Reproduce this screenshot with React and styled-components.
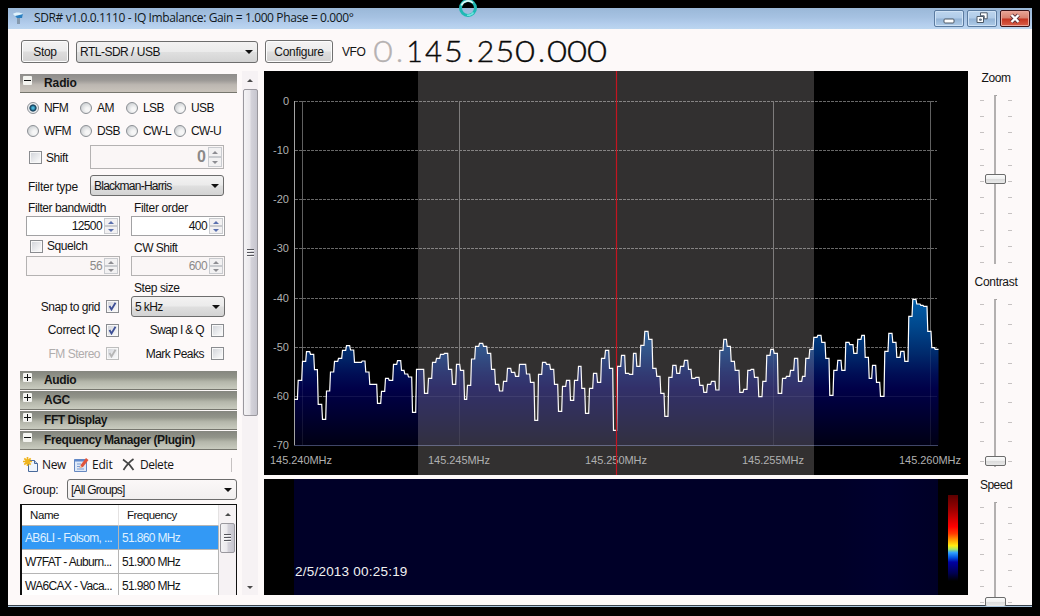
import React from "react";
import styled, { createGlobalStyle, css } from "styled-components";

const Global = createGlobalStyle`
  * { box-sizing: border-box; }
  html, body { margin: 0; background: #000; }
  body { width: 1040px; height: 616px; overflow: hidden; font-family: "Liberation Sans", Arial, sans-serif; font-size: 12px; color: #141414; }
`;

const Desktop = styled.div`
  position: relative;
  width: 1040px;
  height: 616px;
  padding: 8px;
  background: #000;
  overflow: hidden;
`;

const Window = styled.main`
  display: flex;
  flex-direction: column;
  width: 1024px;
  height: 599px;
  overflow: hidden;
  background: #fdf9f9;
  border-bottom: 1px solid #a9c4dc;
  box-shadow: inset 0 -1px 0 #39434c;
`;

const BusyCursor = styled.svg`
  position: absolute;
  left: 458px;
  top: -2px;
`;

const TitleBar = styled.header`
  display: flex;
  height: 21px;
  flex: none;
  align-items: center;
  padding: 0 2px 0 4px;
  background: linear-gradient(#9ab8d8 0%, #a6c2e2 45%, #b3cdec 75%, #bcd6f0 100%);
`;

const Title = styled.h1`
  flex: 1;
  margin: 0 0 1px 9px;
  font: 400 12px/18px "Open Sans", "Noto Sans", sans-serif;
  letter-spacing: ${(p) => p.$ls}px;
  white-space: nowrap;
  color: #101820;
`;

const CaptionButtons = styled.div`
  display: flex;
  gap: 3px;
  height: 17px;
  margin-bottom: 1px;
`;

const CaptionButton = styled.button`
  display: flex;
  align-items: center;
  justify-content: center;
  width: 30px;
  height: 17px;
  padding: 0;
  border-radius: 2px;
  border: 1px solid ${(p) => (p.$close ? "#3a1418" : "#5b7ba0")};
  box-shadow: inset 0 0 0 1px ${(p) => (p.$close ? "#eba69a" : "#cfe2f5")};
  background: ${(p) =>
    p.$close
      ? "linear-gradient(#e9a596 0%, #d9806e 48%, #c53420 52%, #d9604a 100%)"
      : "linear-gradient(#bdd5ee 0%, #b0cbe8 48%, #93b3d5 52%, #afcbe8 100%)"};
`;

const Text = styled.span`
  font-size: ${(p) => p.$size || 12}px;
  line-height: 14px;
  letter-spacing: ${(p) => p.$ls ?? -0.42}px;
  font-weight: ${(p) => (p.$bold ? 700 : 400)};
  color: ${(p) => p.$color || "inherit"};
  white-space: nowrap;
  ${(p) => p.$humanist && css`font-family: "Open Sans", "Noto Sans", sans-serif;`}
`;

const Toolbar = styled.div`
  display: flex;
  flex: none;
  height: 42px;
  align-items: center;
  padding: 3px 0 0 13px;
`;

const PushButton = styled.button`
  width: ${(p) => p.$w}px;
  height: 23px;
  margin-right: ${(p) => p.$mr || 7}px;
  padding: 0;
  border: 1px solid #707070;
  border-radius: 3px;
  box-shadow: inset 0 0 0 1px #fcfcfc;
  background: linear-gradient(#f4f3f3 0%, #ececec 48%, #dedddd 52%, #d2d1d1 100%);
  color: inherit;
`;

const Combo = styled.div`
  display: flex;
  align-items: center;
  justify-content: space-between;
  width: ${(p) => p.$w}px;
  height: ${(p) => p.$h || 21}px;
  margin-right: ${(p) => p.$mr || 0}px;
  padding: 0 4px 0 3px;
  border: 1px solid #6d6d6d;
  border-radius: 3px;
  background: ${(p) => (p.$flat ? "linear-gradient(#fbf8f8, #f1efef)" : "linear-gradient(#f3f2f2 0%, #ebebeb 48%, #dfdfdf 52%, #d3d3d3 100%)")};
`;

const Arrow = styled.i`
  width: 0;
  height: 0;
  border: ${(p) => p.$s || 4}px solid transparent;
  ${(p) =>
    p.$up
      ? css`border-top: 0; border-bottom-color: ${p.$c || "#111"};`
      : css`border-bottom: 0; border-top-color: ${p.$c || "#111"};`}
`;

const Frequency = styled.div`
  display: flex;
  margin: 0 0 3px 8px;
  height: 36px;
  align-items: center;
`;

const Digit = styled.span`
  width: ${(p) => p.$w}px;
  text-align: center;
  font: 300 30px/36px Lato, "Open Sans", sans-serif;
  transform: scaleX(${(p) => p.$sx || 1});
  color: ${(p) => (p.$dim ? "#b5b1b1" : "#0a0a0a")};
  -webkit-text-stroke: 0.4px currentColor;
`;

const Body = styled.div`
  display: flex;
  flex: 1;
  min-height: 0;
  padding-left: 12px;
`;

const Pane = styled.aside`
  display: flex;
  flex-direction: column;
  width: 218px;
  height: 524px;
  padding-top: 3px;
  overflow: hidden;
`;

const Section = styled.div`
  display: flex;
  flex: none;
  align-items: center;
  width: 217px;
  height: 19px;
  margin-bottom: 1px;
  padding-left: 3px;
  border-bottom: 1px solid #76766e;
  background: ${(p) =>
    p.$warm
      ? "linear-gradient(#8f8d8b 0%, #9c9996 35%, #bcb7b1 60%, #c9c3bb 100%)"
      : "linear-gradient(#85867f 0%, #92948a 35%, #b4b6aa 60%, #c9cbbf 100%)"};
`;

const Toggle = styled.span`
  display: flex;
  align-items: center;
  justify-content: center;
  width: 9px;
  height: 9px;
  margin: -6px 12px 0 0;
  border-radius: 1px;
  background: #f4f4f0;
`;

const RadioGrid = styled.div`
  display: grid;
  flex: none;
  grid-template-columns: 53px 46px 48px 50px;
  grid-auto-rows: 23px;
  margin-top: 2px;
  padding-left: 7px;
`;

const RadioItem = styled.label`
  display: flex;
  align-items: center;
  gap: 5px;
`;

const Dot = styled.i`
  flex: none;
  width: 12px;
  height: 12px;
  border-radius: 50%;
  border: 1px solid #8b8f94;
  background: ${(p) =>
    p.$on
      ? "radial-gradient(circle, #49b4d8 0 1px, #17506f 2.6px, #1c3f58 3.2px, #e9edf0 4px)"
      : "radial-gradient(circle at 65% 65%, #f6f6f6 20%, #cfd2d5 75%)"};
`;

const Row = styled.div`
  display: flex;
  flex: none;
  align-items: center;
  height: ${(p) => p.$h}px;
  margin-bottom: ${(p) => p.$mb || 0}px;
  padding-left: ${(p) => p.$pl || 0}px;
`;

const Cell = styled.div`
  display: flex;
  flex: none;
  align-items: center;
  justify-content: ${(p) => (p.$end ? "flex-end" : "flex-start")};
  gap: ${(p) => p.$gap || 0}px;
  width: ${(p) => p.$w}px;
  padding-top: ${(p) => p.$pt || 0}px;
`;

const Box = styled.span`
  display: flex;
  flex: none;
  align-items: center;
  justify-content: center;
  width: 13px;
  height: 13px;
  border: 1px solid ${(p) => (p.$dim ? "#bdbdbd" : "#8a8c90")};
  box-shadow: inset 0 0 0 1px #f8f8f8;
  background: linear-gradient(135deg, #cfd2d8, #f6f6f7 80%);
`;

const Numeric = styled.div`
  display: flex;
  align-items: center;
  justify-content: flex-end;
  gap: 2px;
  width: ${(p) => p.$w}px;
  height: ${(p) => p.$h || 20}px;
  margin-right: ${(p) => p.$mr || 0}px;
  padding: 0 1px;
  border: 1px solid ${(p) => (p.$dim ? "#b4b2b2" : "#a2a2a4")};
  background: ${(p) => (p.$dim ? "#faf6f6" : "#fff")};
`;

const SpinStack = styled.span`
  display: grid;
  grid-template-rows: 1fr 1fr;
  width: 14px;
  height: calc(100% - 2px);
`;

const SpinKey = styled.span`
  display: flex;
  align-items: center;
  justify-content: center;
  border: 1px solid #c9cbcf;
  background: #f2f1f2;
`;

const Commands = styled.div`
  display: flex;
  flex: none;
  align-items: center;
  height: 27px;
  padding-left: 3px;
`;

const Command = styled.span`
  display: flex;
  align-items: center;
  gap: ${(p) => p.$gap}px;
  width: ${(p) => p.$w}px;
`;

const Divider = styled.i`
  width: 1px;
  height: 14px;
  margin-left: auto;
  margin-right: 6px;
  background: #c6c2c2;
`;

const Table = styled.div`
  display: flex;
  flex: none;
  width: 217px;
  height: 100px;
  margin-top: 3px;
  border: 1px solid #111;
  border-left-width: 2px;
  background: #fff;
`;

const Grid = styled.div`
  display: grid;
  grid-template-columns: 97px 100px;
  grid-template-rows: 21px 24px 24px 24px;
  align-content: start;
`;

const GridCell = styled.div`
  display: flex;
  align-items: center;
  overflow: hidden;
  padding-left: ${(p) => (p.$head ? 8 : 3)}px;
  border-right: 1px solid ${(p) => (p.$head ? "#e4e2e2" : "#b5b5b5")};
  border-bottom: 1px solid #b5b5b5;
  background: ${(p) => (p.$active ? "#3399f5" : "#fff")};
  color: ${(p) => (p.$active ? "#dff0ff" : "inherit")};
`;

const ScrollRail = styled.div`
  display: flex;
  flex-direction: column;
  align-items: center;
  width: ${(p) => p.$w}px;
  height: ${(p) => p.$h || "auto"};
  margin: ${(p) => p.$m || 0};
  background: #f6f2f4;
`;

const RailEnd = styled.span`
  display: flex;
  flex: none;
  align-items: center;
  justify-content: center;
  height: ${(p) => p.$h}px;
  margin-top: ${(p) => (p.$last ? "auto" : 0)};
`;

const RailThumb = styled.span`
  display: flex;
  flex: none;
  flex-direction: column;
  align-items: center;
  justify-content: center;
  gap: 1px;
  width: 15px;
  height: ${(p) => p.$h}px;
  border: 1px solid #9a989e;
  border-radius: 2px;
  background: linear-gradient(90deg, #f4f3f5 0%, #eae8ec 45%, #d4d2da 55%, #c6c5ce 100%);
`;

const Grip = styled.i`
  width: 7px;
  height: 2px;
  border-top: 1px solid #55555c;
  background: #f6f6f6;
`;

const Displays = styled.section`
  display: flex;
  flex-direction: column;
  gap: 4px;
  width: 704px;
  margin-left: 6px;
`;

const Spectrum = styled.svg`
  display: block;
  flex: none;
  width: 704px;
  height: 404px;
  background: #000;
`;

const Waterfall = styled.div`
  display: flex;
  width: 704px;
  height: 116px;
  padding-left: 30px;
  background: #000;
`;

const WaterfallImage = styled.div`
  display: flex;
  align-items: flex-end;
  width: 644px;
  padding: 0 0 16px 1px;
  background: linear-gradient(90deg, #000028 0 84%, #00002e 92%, #000026 100%);
`;

const Legend = styled.div`
  width: 10px;
  height: 86px;
  margin: 16px 0 0 10px;
  background: linear-gradient(#5c0000 0%, #a00000 18%, #f00 37%, #ff3c00 45%, #ff9a00 52%, #ffee10 59%, #a8e860 63%, #2fa0ff 67%, #0050e0 73%, #0000a0 78%, #000050 91%, #000 100%);
`;

const Side = styled.aside`
  display: flex;
  flex-direction: column;
  align-items: center;
  width: 56px;
`;

const SliderLabel = styled.div`
  height: 14px;
  flex: none;
  margin-top: ${(p) => p.$mt}px;
`;

const Slider = styled.div`
  position: relative;
  display: flex;
  flex: none;
  justify-content: space-between;
  width: 32px;
  height: ${(p) => p.$h}px;
  margin-top: 10px;
`;

const Ticks = styled.div`
  display: flex;
  flex-direction: column;
  justify-content: space-between;
  height: ${(p) => p.$h}px;
  margin-top: 5px;
`;

const Tick = styled.i`
  width: 4px;
  height: 1px;
  background: #c6c2c2;
`;

const Track = styled.i`
  width: 3px;
  height: 100%;
  margin-right: 2px;
  border-left: 2px solid #b3b0b0;
  border-top: 1px solid #a5a2a2;
`;

const Knob = styled.i`
  position: absolute;
  left: 5px;
  top: ${(p) => p.$top}px;
  width: 21px;
  height: 10px;
  border: 1px solid #6c6c6c;
  border-radius: 2px;
  background: linear-gradient(#fbfbfb 0%, #efefef 50%, #dcdcdc 55%, #e8e8e8 100%);
`;

const Check = ({ on, dim }) => (
  <Box $dim={dim}>
    {on && (
      <svg width="9" height="9" viewBox="0 0 9 9">
        <path d="M1.5 4 3.5 7.5 7.5.8" fill="none" stroke={dim ? "#b5b5b5" : "#3d4f96"} strokeWidth="1.8" />
      </svg>
    )}
  </Box>
);

const Spinner = ({ value, w, h, mr, dim, big }) => (
  <Numeric $w={w} $h={h} $mr={mr} $dim={dim}>
    <Text $size={big ? 16 : 12} $bold={big} $ls={big ? 0 : -0.6} $color={dim ? "#8b8989" : undefined}>{value}</Text>
    <SpinStack>
      <SpinKey><Arrow $up $s={3} $c={dim ? "#8d8d92" : "#5a70ae"} /></SpinKey>
      <SpinKey><Arrow $s={3} $c={dim ? "#8d8d92" : "#5a70ae"} /></SpinKey>
    </SpinStack>
  </Numeric>
);

const SectionHeader = ({ open, warm, ls, children }) => (
  <Section $warm={warm}>
    <Toggle>
      <svg width="7" height="7" viewBox="0 0 7 7">
        <path d={open ? "M0 3.5h7" : "M0 3.5h7M3.5 0v7"} stroke="#111" />
      </svg>
    </Toggle>
    <Text $bold $ls={ls}>{children}</Text>
  </Section>
);

/* Steps of the spectrum trace in thirds of a pixel: x start and level of each bin. */
const segments = [
  { x: 0, y: 687, steps: [[91,298],[101,241],[114,184],[126,155],[138,163],[150,209],[161,313],[174,358],[186,273],[198,216],[210,184],[222,175],[234,151],[246,137],[258,150],[270,187],[293,183],[304,216],[316,253],[339,310],[351,274],[363,235],[374,241],[387,193],[399,182],[411,211],[421,222],[432,231],[444,337],[456,208],[480,280],[492,235],[504,187],[516,175],[528,163]] },
  { x: 528, y: 687, steps: [[12,160],[24,208],[36,253],[48,193],[60,211],[72,298],[81,256],[93,177],[105,139],[117,130],[129,139],[141,160],[153,208],[165,253],[177,273],[189,244],[201,205],[213,217],[225,229],[237,193],[258,222],[270,247],[283,361],[294,223],[306,187],[318,193],[330,208],[342,253],[354,334],[366,259],[378,241],[390,301],[402,241],[414,199],[424,265],[435,340],[447,265],[459,220],[471,247],[483,175],[495,151],[507,205]] },
  { x: 1038, y: 687, steps: [[9,391],[21,199],[33,166],[45,220],[57,223],[69,160],[79,199],[91,136],[103,94],[115,118],[127,205],[139,229],[151,280],[163,349],[175,232],[187,196],[199,220],[210,199],[222,181],[234,208],[244,235],[256,232],[268,256],[280,277],[291,253],[303,244],[316,270],[328,151],[340,118],[350,139],[362,184],[374,211],[388,277],[400,268],[412,211],[422,208],[432,232],[445,290],[457,244],[469,166],[481,148],[491,160],[503,280]] },
  { x: 1548, y: 627, steps: [[6,295],[18,289],[30,271],[42,235],[54,304],[66,289],[76,235],[88,208],[100,172],[112,166],[124,187],[136,235],[148,346],[160,271],[172,241],[184,271],[196,187],[208,194],[220,220],[232,178],[244,166],[254,232],[266,295],[276,256],[288,307],[300,349],[313,214],[325,160],[337,187],[349,232],[361,214],[373,244],[385,109],[397,58],[409,72],[421,76],[430,79],[442,154],[454,203],[464,208],[474,208]] },
];

const points = segments.flatMap((s) => s.steps.map(([x, y]) => [(x + s.x) / 3, (y + s.y) / 3]));
const trace = points
  .map(([x, y], i) => {
    if (i === 0) return `M${x.toFixed(1)} ${y.toFixed(1)}`;
    const prev = points[i - 1];
    return `L${(x - 0.3).toFixed(1)} ${prev[1].toFixed(1)}L${(x + 0.5).toFixed(1)} ${y.toFixed(1)}`;
  })
  .join("");
const area = `${trace}V374.5H30.5Z`;

const levels = [["0", 30], ["-10", 79], ["-20", 128], ["-30", 177], ["-40", 227], ["-50", 276], ["-60", 325], ["-70", 374]];
const marks = [["145.240MHz", 38, 37], ["145.245MHz", 195, 195], ["145.250MHz", 352, 352], ["145.255MHz", 509, 509], ["145.260MHz", 666, 666]];

const SpectrumView = () => (
  <Spectrum viewBox="0 0 704 404">
    <defs>
      <linearGradient id="level" gradientUnits="userSpaceOnUse" x1="0" y1="226" x2="0" y2="374">
        <stop offset="0" stopColor="#0060ac" />
        <stop offset="0.2" stopColor="#00478c" />
        <stop offset="0.38" stopColor="#002a6c" />
        <stop offset="0.52" stopColor="#000e55" />
        <stop offset="0.62" stopColor="#000048" />
        <stop offset="0.8" stopColor="#000030" />
        <stop offset="1" stopColor="#000014" />
      </linearGradient>
    </defs>
    {levels.slice(0, 7).map(([t, y]) => (
      <path key={t} d={`M31 ${y + 0.5}H673`} stroke="#686868" strokeDasharray="3 1" />
    ))}
    {marks.map(([t, x]) => (
      <path key={t} d={`M${x + 0.5} 30V374`} stroke="#606060" />
    ))}
    <path d={area} fill="url(#level)" />
    <path d="M31 325.5H673" stroke="#fff" opacity="0.07" />
    {marks.map(([t, x]) => (
      <path key={t} d={`M${x + 0.5} 276V374`} stroke="#fff" opacity="0.08" />
    ))}
    <path d="M30.5 30V374.5" stroke="#a4a4a4" />
    <path d="M30.5 374.5H674" stroke="#3f4668" />
    <path d={trace} fill="none" stroke="#fff" strokeWidth="1.2" />
    <rect x="154" y="0" width="396" height="404" fill="#f8f0f0" opacity="0.2" />
    <g fill="#b0b0b0" fontSize="11" fontFamily="Liberation Sans, Arial, sans-serif">
      {levels.map(([t, y]) => (
        <text key={t} x="25" y={y + 4} textAnchor="end">{t}</text>
      ))}
      {marks.map(([t, , x]) => (
        <text key={t} x={x} y="393" textAnchor="middle" textLength="62">{t}</text>
      ))}
    </g>
    <path d="M352.5 0V404" stroke="#c41420" strokeWidth="1.2" />
  </Spectrum>
);

const digits = [
  ["0", 20, 1.12, true], [".", 12, 1, true], ["1", 19, 0.95], ["4", 19, 0.98], ["5", 21, 1.08], [".", 12, 1],
  ["2", 18, 1], ["5", 22, 1.08], ["0", 18, 1.15], [".", 14, 1], ["0", 18, 1.15], ["0", 22, 1.15], ["0", 18, 1.15],
];

const Scroller = ({ label, ls, mt, h, ticks, span, top }) => (
  <>
    <SliderLabel $mt={mt}><Text $ls={ls}>{label}</Text></SliderLabel>
    <Slider $h={h}>
      <Ticks $h={span}>{Array.from({ length: ticks }, (_, i) => <Tick key={i} />)}</Ticks>
      <Track />
      <Ticks $h={span}>{Array.from({ length: ticks }, (_, i) => <Tick key={i} />)}</Ticks>
      <Knob $top={top} />
    </Slider>
  </>
);

const modes = ["NFM", "AM", "LSB", "USB", "WFM", "DSB", "CW-L", "CW-U"];
const entries = [["AB6LI - Folsom, ...", "51.860 MHz"], ["W7FAT - Auburn...", "51.900 MHz"], ["WA6CAX - Vaca...", "51.980 MHz"]];

export default function App() {
  return (
    <Desktop>
      <Global />
      <Window>
        <TitleBar>
          <svg width="13" height="16" viewBox="0 0 13 16">
            <path d="M1 3C3 1 8 1 11 3l-1 3H4z" fill="#dff2fc" />
            <path d="M3 5c3-1 6-1 8-2l-1 4H5z" fill="#2b7fc0" />
            <path d="M5 7h3v6H5z" fill="#8599ad" />
          </svg>
          <Title $ls={-0.38}>SDR# v1.0.0.1110 - IQ Imbalance: Gain = 1.000 Phase = 0.000°</Title>
          <CaptionButtons>
            <CaptionButton>
              <svg width="12" height="13" viewBox="0 0 12 13"><rect x="1" y="7" width="10" height="4" rx="1" fill="#fff" stroke="#4c5866" /></svg>
            </CaptionButton>
            <CaptionButton>
              <svg width="12" height="12" viewBox="0 0 12 12">
                <path d="M4.5.8h6.700v6h-3v-3h-3.700z" fill="#fff" stroke="#4c5866" />
                <path d="M1 4.500h6.500v6H1z" fill="#fff" stroke="#4c5866" />
                <path d="M3.500 7h1.800v1.300H3.500z" fill="#8db0d4" stroke="#4c5866" strokeWidth="0.800" />
              </svg>
            </CaptionButton>
            <CaptionButton $close>
              <svg width="12" height="11" viewBox="0 0 12 11">
                <path d="M2.500 2 9.500 9M9.500 2 2.500 9" stroke="#5a3038" strokeWidth="4" />
                <path d="M2.500 2 9.500 9M9.500 2 2.500 9" stroke="#fff" strokeWidth="2.400" />
              </svg>
            </CaptionButton>
          </CaptionButtons>
        </TitleBar>

        <Toolbar>
          <PushButton $w={48}><Text $ls={-0.35}>Stop</Text></PushButton>
          <Combo $w={182} $h={22} $mr={7}><Text $ls={-0.5}>RTL-SDR / USB</Text><Arrow /></Combo>
          <PushButton $w={68} $mr={9}><Text $ls={-0.3}>Configure</Text></PushButton>
          <Text $ls={-0.4}>VFO</Text>
          <Frequency>
            {digits.map(([d, w, sx, dim], i) => (
              <Digit key={i} $w={w} $sx={sx} $dim={dim}>{d}</Digit>
            ))}
          </Frequency>
        </Toolbar>

        <Body>
          <Pane>
            <SectionHeader open warm ls={-0.1}>Radio</SectionHeader>
            <RadioGrid>
              {modes.map((m, i) => (
                <RadioItem key={m}><Dot $on={i === 0} /><Text $ls={-0.6}>{m}</Text></RadioItem>
              ))}
            </RadioGrid>
            <Row $h={30} $pl={9}>
              <Cell $w={61} $gap={4} $pt={1}><Check /><Text>Shift</Text></Cell>
              <Spinner value="0" w={134} h={24} dim big />
            </Row>
            <Row $h={27} $pl={8}>
              <Cell $w={62} $pt={3}><Text $ls={-0.25}>Filter type</Text></Cell>
              <Combo $w={134}><Text $ls={-0.75}>Blackman-Harris</Text><Arrow /></Combo>
            </Row>
            <Row $h={17} $pl={8}>
              <Cell $w={106}><Text>Filter bandwidth</Text></Cell>
              <Cell $w={80}><Text $ls={-0.35}>Filter order</Text></Cell>
            </Row>
            <Row $h={20} $pl={6}>
              <Spinner value="12500" w={94} mr={11} />
              <Spinner value="400" w={94} />
            </Row>
            <Row $h={20} $pl={10}>
              <Cell $w={104} $gap={4}><Check /><Text>Squelch</Text></Cell>
              <Cell $w={80} $pt={3}><Text $ls={-0.5}>CW Shift</Text></Cell>
            </Row>
            <Row $h={20} $pl={6}>
              <Spinner value="56" w={94} mr={11} dim />
              <Spinner value="600" w={94} dim />
            </Row>
            <Row $h={20} $pl={114}><Cell $w={80} $pt={4}><Text>Step size</Text></Cell></Row>
            <Row $h={21}>
              <Cell $w={99} $gap={6} $end><Text $ls={-0.45}>Snap to grid</Text><Check on /></Cell>
              <Cell $w={106} $end><Combo $w={94}><Text $ls={-0.6}>5 kHz</Text><Arrow /></Combo></Cell>
            </Row>
            <Row $h={26}>
              <Cell $w={99} $gap={6} $end><Text $ls={-0.3}>Correct IQ</Text><Check on /></Cell>
              <Cell $w={105} $gap={7} $end><Text $ls={-0.65}>Swap I &amp; Q</Text><Check /></Cell>
            </Row>
            <Row $h={21} $mb={7}>
              <Cell $w={99} $gap={6} $end><Text $ls={-0.5} $color="#b0adad">FM Stereo</Text><Check on dim /></Cell>
              <Cell $w={105} $gap={7} $end><Text $ls={-0.5}>Mark Peaks</Text><Check /></Cell>
            </Row>
            <SectionHeader ls={-0.35}>Audio</SectionHeader>
            <SectionHeader ls={-0.2}>AGC</SectionHeader>
            <SectionHeader ls={-0.45}>FFT Display</SectionHeader>
            <SectionHeader open ls={-0.4}>Frequency Manager (Plugin)</SectionHeader>
            <Commands>
              <Command $w={51} $gap={3}>
                <svg width="16" height="16" viewBox="0 0 16 16">
                  <path d="M5.500 3.500h6l3 3v8h-9z" fill="#eef4fc" stroke="#48699a" />
                  <path d="M11.500 3.500v3h3" fill="#b8cdea" stroke="#48699a" />
                  <path d="M4.500 0v9M0 4.500h9M1.300 1.300l6.400 6.400M7.700 1.300 1.300 7.700" stroke="#f0b41c" strokeWidth="1.700" />
                </svg>
                <Text $humanist $ls={-0.35}>New</Text>
              </Command>
              <Command $w={48} $gap={3}>
                <svg width="15" height="16" viewBox="0 0 15 16">
                  <path d="M.5 2.500h12v12H.5z" fill="#dfe9f8" stroke="#6788c0" />
                  <path d="M.5 2.500h12v2H.5z" fill="#5f88cc" />
                  <path d="M3 7h4M3 9.500h3M3 12h7" stroke="#7d9bd0" />
                  <path d="M5.500 11 7 7.500 12 1l2.500 2-5.500 7z" fill="#e0553c" />
                  <path d="M5.500 11 6.300 8.800 8 10z" fill="#f4dcae" />
                </svg>
                <Text $humanist $ls={-0.2}>Edit</Text>
              </Command>
              <Command $w={60} $gap={5}>
                <svg width="13" height="13" viewBox="0 0 13 13">
                  <path d="M1 1.500C5 4 9 8 11.500 12M11.500 1C7 4 4 8 1.500 12" fill="none" stroke="#444" strokeWidth="1.700" />
                </svg>
                <Text $humanist $ls={-0.45}>Delete</Text>
              </Command>
              <Divider />
            </Commands>
            <Row $h={23} $pl={3}>
              <Cell $w={44}><Text $ls={-0.2}>Group:</Text></Cell>
              <Combo $w={170} $flat><Text $ls={-0.75}>[All Groups]</Text><Arrow /></Combo>
            </Row>
            <Table>
              <Grid>
                <GridCell $head><Text $ls={-0.4} $size={11.5}>Name</Text></GridCell>
                <GridCell $head><Text $ls={-0.5} $size={11.5}>Frequency</Text></GridCell>
                {entries.map(([name, freq], i) => (
                  <React.Fragment key={name}>
                    <GridCell $active={i === 0}><Text $ls={-0.65}>{name}</Text></GridCell>
                    <GridCell $active={i === 0}><Text $ls={-0.65}>{freq}</Text></GridCell>
                  </React.Fragment>
                ))}
              </Grid>
              <ScrollRail $w={17}>
                <RailEnd $h={18}><Arrow $up $s={3.5} $c="#4b4b4b" /></RailEnd>
                <RailThumb $h={30}><Grip /><Grip /><Grip /></RailThumb>
              </ScrollRail>
            </Table>
          </Pane>

          <ScrollRail $w={16} $h="524px" $m="0 0 0 4px">
            <RailEnd $h={18}><Arrow $up $s={3.5} $c="#4b4b4b" /></RailEnd>
            <RailThumb $h={327}><Grip /><Grip /><Grip /></RailThumb>
            <RailEnd $h={16} $last><Arrow $s={3.5} $c="#4b4b4b" /></RailEnd>
          </ScrollRail>

          <Displays>
            <SpectrumView />
            <Waterfall>
              <WaterfallImage><Text $size={13.5} $ls={0.22} $color="#f2f2f2">2/5/2013 00:25:19</Text></WaterfallImage>
              <Legend />
            </Waterfall>
          </Displays>

          <Side>
            <Scroller label="Zoom" ls={-0.4} mt={0} h={169} ticks={11} span={163} top={79} />
            <Scroller label="Contrast" ls={-0.3} mt={11} h={168} ticks={9} span={158} top={157} />
            <Scroller label="Speed" ls={-0.5} mt={11} h={110} ticks={7} span={96} top={95} />
          </Side>
        </Body>
      </Window>
      <BusyCursor width="20" height="20" viewBox="0 0 20 20">
        <circle cx="10" cy="10" r="7.500" fill="none" stroke="#1fb9b4" strokeWidth="3" />
        <path d="M3.500 7.500A7 7 0 0 1 15 5" fill="none" stroke="#dcf8f6" strokeWidth="1.600" />
        <path d="M15.500 14.500A7.200 7.200 0 0 1 9 17.300" fill="none" stroke="#6fe6de" strokeWidth="1.500" />
      </BusyCursor>
    </Desktop>
  );
}
